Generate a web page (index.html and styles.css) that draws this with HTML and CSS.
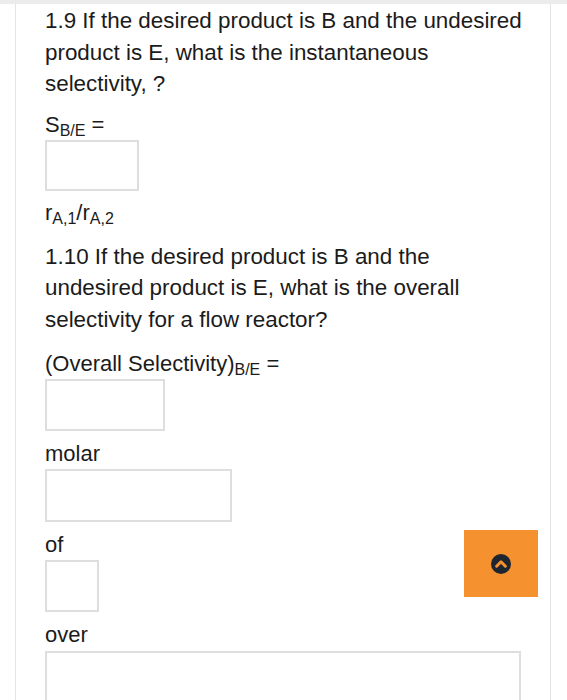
FILE: index.html
```html
<!DOCTYPE html>
<html>
<head>
<meta charset="utf-8">
<link rel="stylesheet" href="styles.css">
</head>
<body>
<div class="topbar"></div>
<div class="card">
  <p class="q q1">1.9 If the desired product is B and the undesired product is E, what is the instantaneous selectivity, ?</p>
  <div class="label lbl-s">S<sub>B/E</sub> =</div>
  <div class="box box-a"></div>
  <div class="label lbl-r">r<sub>A,1</sub>/r<sub>A,2</sub></div>
  <p class="q q2">1.10 If the desired product is B and the undesired product is E, what is the overall selectivity for a flow reactor?</p>
  <div class="label lbl-o">(Overall Selectivity)<sub>B/E</sub> =</div>
  <div class="box box-b"></div>
  <div class="label lbl-w">molar</div>
  <div class="box box-c"></div>
  <div class="label lbl-w">of</div>
  <div class="box box-d"></div>
  <div class="label lbl-w">over</div>
  <div class="box box-e"></div>
  <button class="up-btn" type="button" aria-label="Scroll to top">
    <svg width="20" height="20" viewBox="0 0 20 20">
      <circle cx="10" cy="10" r="10" fill="#1c2530"/>
      <path d="M5.6 12.2 L10 7.8 L14.4 12.2" fill="none" stroke="#f5922f" stroke-width="3" stroke-linecap="round" stroke-linejoin="round"/>
    </svg>
  </button>
</div>
</body>
</html>
```
FILE: styles.css
```css
html, body {
  margin: 0;
  padding: 0;
  background: #ffffff;
}
body {
  font-family: "Liberation Sans", Arial, sans-serif;
  color: #1b1b1b;
  width: 567px;
  height: 700px;
  overflow: hidden;
}
.topbar {
  height: 4px;
  background: #ececec;
}
.card {
  position: relative;
  margin-left: 15px;
  width: 536px;
  min-height: 720px;
  border-left: 1px solid #e4e4e4;
  border-right: 1px solid #e4e4e4;
  padding-left: 29px;
  box-sizing: border-box;
}
.q {
  margin: 0;
  font-size: 22.4px;
  line-height: 31.5px;
  width: 482px;
}
.q1 { padding-top: 1px; }
.q2 { margin-top: 13px; }
.label {
  font-size: 22px;
  line-height: 30px;
}
.label sub {
  font-size: 16px;
  line-height: 0;
  vertical-align: -4px;
}
.lbl-s { margin-top: 10px; }
.lbl-r { margin-top: 7px; }
.lbl-o { margin-top: 14px; }
.lbl-w { margin-top: 8px; }
.box {
  box-sizing: border-box;
  border: 2px solid #dedede;
  background: #fff;
}
.box-a { width: 94px; height: 51px; }
.box-b { width: 120px; height: 52px; }
.box-c { width: 187px; height: 53px; }
.box-d { width: 54px; height: 52px; }
.box-e { width: 476px; height: 60px; margin-top: 1px; }
.up-btn {
  position: absolute;
  left: 448px;
  top: 526px;
  width: 74px;
  height: 67px;
  border: none;
  padding: 0;
  background: #f5922f;
  display: flex;
  align-items: center;
  justify-content: center;
}
.up-btn svg { display: block; }
```
